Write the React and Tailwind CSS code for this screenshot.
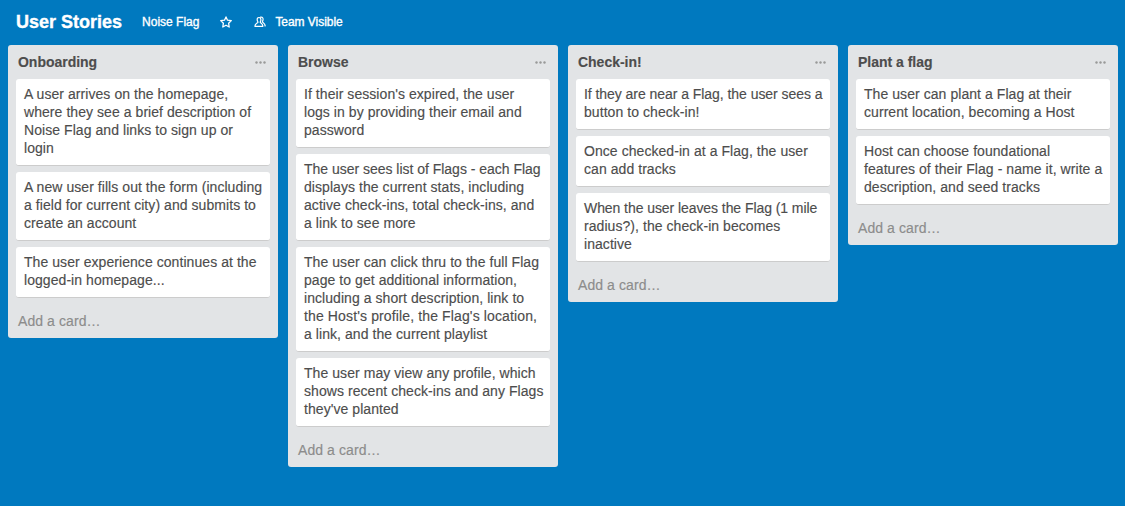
import React from "react";

const lists = [
  {
    title: "Onboarding",
    cards: [
      "A user arrives on the homepage,\nwhere they see a brief description of\nNoise Flag and links to sign up or\nlogin",
      "A new user fills out the form (including\na field for current city) and submits to\ncreate an account",
      "The user experience continues at the\nlogged-in homepage...",
    ],
  },
  {
    title: "Browse",
    cards: [
      "If their session's expired, the user\nlogs in by providing their email and\npassword",
      "The user sees list of Flags - each Flag\ndisplays the current stats, including\nactive check-ins, total check-ins, and\na link to see more",
      "The user can click thru to the full Flag\npage to get additional information,\nincluding a short description, link to\nthe Host's profile, the Flag's location,\na link, and the current playlist",
      "The user may view any profile, which\nshows recent check-ins and any Flags\nthey've planted",
    ],
  },
  {
    title: "Check-in!",
    cards: [
      "If they are near a Flag, the user sees a\nbutton to check-in!",
      "Once checked-in at a Flag, the user\ncan add tracks",
      "When the user leaves the Flag (1 mile\nradius?), the check-in becomes\ninactive",
    ],
  },
  {
    title: "Plant a flag",
    cards: [
      "The user can plant a Flag at their\ncurrent location, becoming a Host",
      "Host can choose foundational\nfeatures of their Flag - name it, write a\ndescription, and seed tracks",
    ],
  },
];

// Lines whose tracking differs from the regular card text.
const lineTracking = {
  "If they are near a Flag, the user sees a": "tracking-[-0.05px]",
  "When the user leaves the Flag (1 mile": "tracking-[-0.07px]",
  "The user sees list of Flags - each Flag": "tracking-[-0.02px]",
  "the Host's profile, the Flag's location,": "tracking-[0.13px]",
};

function StarIcon() {
  return (
    <svg className="ml-[21px] h-3 w-3 shrink-0" viewBox="0 0 12 12" fill="none" stroke="currentColor" strokeWidth="1.3" strokeLinejoin="round">
      <path d="M6 .9 7.5 4.2 11.3 4.6 8.6 7.2 9.2 11 6 9.2 2.8 11 3.4 7.2.7 4.6 4.5 4.2Z" />
    </svg>
  );
}

function MembersIcon() {
  return (
    <svg className="ml-[22px] h-3 w-3 shrink-0" viewBox="0 0 12 12" fill="none" stroke="currentColor" strokeWidth="1.2" strokeLinejoin="round" strokeLinecap="round">
      <path d="M5 1.5C3.6 1.5 3.1 2.5 3.2 3.9 3.3 5 3.7 5.5 4 6.1 3.8 7.2 1.1 7.2.9 10.3H8.9C8.7 7.2 6.4 7.2 6.2 6.1 6.6 5.5 6.9 5 6.9 3.8 6.9 2.4 6.3 1.5 5 1.5Z" />
      <path d="M6.6 1.1C8.6.8 9.3 2.2 9 3.9 8.8 4.9 8.4 5.3 8.6 6 9 6.9 10.9 7.4 11.2 9.8H10.9" />
    </svg>
  );
}

function List({ title, cards }) {
  return (
    <section className="w-[270px] shrink-0 rounded-[3px] bg-[#e2e4e6] px-2">
      <header className="flex h-[34px] items-center justify-between pl-0.5 pr-1">
        <h2 className="text-[14px] font-bold leading-[18px] tracking-[-0.02px]">{title}</h2>
        <svg className="h-[3px] w-[11px]" viewBox="0 0 11 3" fill="#999999">
          <circle cx="1.5" cy="1.5" r="1.2" />
          <circle cx="5.5" cy="1.5" r="1.2" />
          <circle cx="9.5" cy="1.5" r="1.2" />
        </svg>
      </header>
      <div className="flex flex-col gap-1.5">
        {cards.map((text) => (
          <p key={text} className="whitespace-nowrap rounded-[3px] border-b border-[#cccccc] bg-white px-2 pb-2 pt-1.5 leading-[18px]">
            {text.split("\n").map((line) => (
              <span key={line} className={`block ${lineTracking[line] || "tracking-[0.06px]"}`}>
                {line}
              </span>
            ))}
          </p>
        ))}
      </div>
      <div className="pb-2 pl-0.5 pt-[14px] leading-[18px] tracking-[0.08px] text-[#8c8c8c]">Add a card…</div>
    </section>
  );
}

export default function App() {
  return (
    <main className="h-screen overflow-hidden bg-[#0079bf] font-['Liberation_Sans',Arial,sans-serif] text-[14px] text-[#4d4d4d] [-webkit-text-stroke:0.15px_currentColor]">
      <header className="flex h-[45px] items-center pb-0.5 pl-4 text-[12px] text-white [-webkit-text-stroke:0.35px_currentColor]">
        <h1 className="text-[18px] font-bold leading-6">User Stories</h1>
        <span className="ml-5">Noise Flag</span>
        <StarIcon />
        <MembersIcon />
        <span className="ml-[9px] tracking-[-0.05px]">Team Visible</span>
      </header>
      <div className="flex items-start gap-2.5 pl-2">
        {lists.map((list) => (
          <List key={list.title} {...list} />
        ))}
      </div>
    </main>
  );
}
